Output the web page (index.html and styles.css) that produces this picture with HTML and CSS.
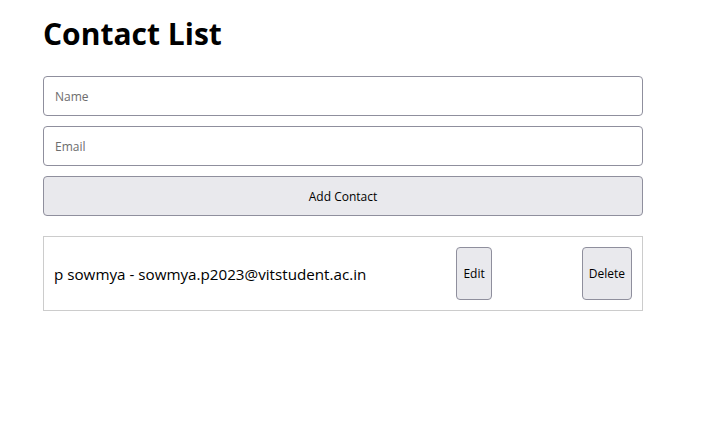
FILE: index.html
```html
<!DOCTYPE html>
<html lang="en">
<head>
<meta charset="utf-8">
<title>Contact List</title>
<link rel="stylesheet" href="styles.css">
</head>
<body>
<div class="app">
  <h1 class="title">Contact List</h1>
  <form class="form">
    <input class="field" type="text" placeholder="Name">
    <input class="field" type="email" placeholder="Email">
    <button class="btn add" type="button">Add Contact</button>
  </form>
  <ul class="list">
    <li class="item">
      <span class="item-text">p sowmya - sowmya.p2023@vitstudent.ac.in</span>
      <button class="btn small edit" type="button">Edit</button>
      <button class="btn small delete" type="button">Delete</button>
    </li>
  </ul>
</div>
</body>
</html>
```
FILE: styles.css
```css
* { box-sizing: border-box; }
body {
  margin: 0;
  background: #fff;
  font-family: "Open Sans", "Noto Sans", sans-serif;
  color: #000;
}
.app {
  width: 600px;
  margin-left: 43px;
  padding-top: 12px;
}
.title {
  margin: 0 0 20px;
  font-size: 30px;
  line-height: 44px;
  font-weight: 700;
}
.form {
  display: flex;
  flex-direction: column;
  gap: 10px;
}
.field {
  height: 40px;
  padding: 0 11px;
  border: 1px solid #8f8f9d;
  border-radius: 4px;
  font-family: inherit;
  font-size: 12px;
  color: #000;
}
.field::placeholder { color: #6d6d6d; }
.btn {
  border: 1px solid #8f8f9d;
  border-radius: 4px;
  background: #e9e9ed;
  font-family: inherit;
  font-size: 12px;
  color: #000;
}
.add { height: 40px; }
.list {
  list-style: none;
  margin: 20px 0 0;
  padding: 0;
}
.item {
  display: flex;
  justify-content: space-between;
  align-items: center;
  height: 75px;
  padding: 10px;
  border: 1px solid #ccc;
}
.item-text { font-size: 15.2px; }
.small {
  height: 53px;
  padding: 0 6px;
}
```
